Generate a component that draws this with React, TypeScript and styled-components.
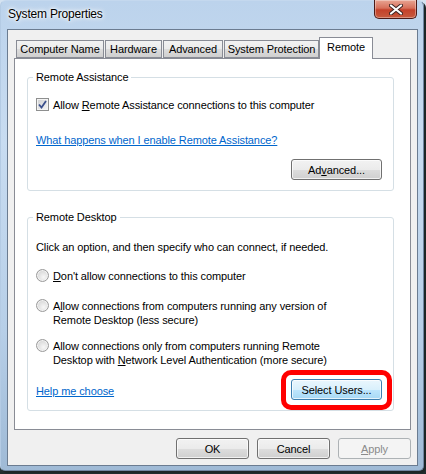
import styled, { createGlobalStyle } from "styled-components"

const GlobalStyle = createGlobalStyle`
    html, body {
        margin: 0;
        padding: 0;
        background: #2a3a3a;
    }
    body {
        font-family: 'Liberation Sans', Arial, sans-serif;
        font-size: 11px;
        letter-spacing: -0.1px;
        color: #000;
    }
`

const Screen = styled.div`
    width: 426px;
    height: 474px;
    overflow: hidden;
    background: linear-gradient(180deg, #d5e3f1 0%, #c9dcef 80%, #1e2b2b 100%);
`

const Frame = styled.div`
    width: 424px;
    height: 471px;
    box-sizing: border-box;
    border-radius: 6px 6px 5px 5px;
    background: linear-gradient(180deg, #bcd3ec 0%, #c8dcf1 30%, #b7cfe8 70%, #9fbad6 100%);
    border: 1px solid #6f86a1;
    border-top-color: #c4d8ee;
    border-left-color: #b4cbe4;
    box-shadow: 2px 2px 0 #1c2626;
    display: flex;
    flex-direction: column;
    padding: 0 5px 4px 6px;
`

const TitleBar = styled.div`
    height: 28px;
    display: flex;
    align-items: flex-start;
    justify-content: space-between;
`

const Title = styled.div`
    padding: 6px 0 0 1px;
    font-size: 12px;
    letter-spacing: -0.2px;
    color: #000;
    text-shadow: 0 0 6px #fff, 0 0 4px #fff, 0 0 2px #fff;
`

const CloseButton = styled.div`
    width: 43px;
    height: 19px;
    margin-top: -1px;
    margin-right: 1px;
    box-sizing: border-box;
    border: 1px solid #4b1a17;
    border-top: none;
    border-radius: 0 0 5px 5px;
    background: linear-gradient(180deg, #e8a593 0%, #d7705b 45%, #c4412a 55%, #c75a3e 100%);
    box-shadow: inset 0 0 0 1px rgba(255, 255, 255, 0.35);
    display: flex;
    align-items: center;
    justify-content: center;
`

const Client = styled.div`
    flex: 1;
    background: #f0f0f0;
    border: 1px solid #6b7c91;
    display: flex;
    flex-direction: column;
    padding: 7px 6px 0 6px;
`

const TabStrip = styled.div`
    display: flex;
    align-items: flex-end;
    height: 21px;
    padding-left: 2px;
    position: relative;
    z-index: 1;
`

const Tab = styled.div<{ $active?: boolean; $w: number }>`
    box-sizing: border-box;
    width: ${p => p.$w}px;
    white-space: nowrap;
    height: ${p => (p.$active ? "22px" : "18px")};
    margin-right: ${p => (p.$active ? "0" : "1px")};
    margin-left: ${p => (p.$active ? "-1px" : "0")};
    margin-bottom: ${p => (p.$active ? "-1px" : "0")};
    border: 1px solid #898c95;
    border-bottom: ${p => (p.$active ? "none" : "1px solid #898c95")};
    background: ${p => (p.$active ? "#fff" : "linear-gradient(180deg, #f2f2f2 0%, #ebebeb 50%, #dddddd 51%, #cfcfcf 100%)")};
    display: flex;
    align-items: center;
    justify-content: center;
    padding-bottom: ${p => (p.$active ? "4px" : "0")};
`

const Panel = styled.div`
    height: 372px;
    box-sizing: border-box;
    background: #fff;
    border: 1px solid #898c95;
    padding: 11px 16px 0 12px;
    display: flex;
    flex-direction: column;
    gap: 19px;
`

const Group = styled.fieldset<{ $bottom: number }>`
    margin: 0;
    box-sizing: border-box;
    border: 1px solid #d5dfe5;
    border-radius: 3px;
    padding: 6px 1px ${p => p.$bottom}px 8px;
    display: flex;
    flex-direction: column;
`

const Legend = styled.legend`
    padding: 0 3px;
    margin-left: -3px;
    line-height: 14px;
`

const Row = styled.label<{ $top?: number }>`
    display: flex;
    align-items: flex-start;
    gap: 4px;
    margin-top: ${p => p.$top ?? 0}px;
    line-height: 14px;
`

const Text = styled.div<{ $top?: number }>`
    margin-top: ${p => p.$top ?? 0}px;
    line-height: 14px;
`

const Box = styled.span`
    width: 13px;
    height: 13px;
    flex: none;
    box-sizing: border-box;
    border: 1px solid #8e8f8f;
    background: linear-gradient(135deg, #cfd0d2 0%, #f5f5f6 100%);
    box-shadow: inset 0 0 0 1px #f4f4f4;
    display: flex;
    align-items: center;
    justify-content: center;
`

const Radio = styled.span`
    width: 13px;
    height: 13px;
    flex: none;
    box-sizing: border-box;
    border-radius: 50%;
    border: 1px solid #9a9a9a;
    background: radial-gradient(circle at 60% 65%, #f7f7f7 0%, #e1e1e1 50%, #c8c8c8 100%);
    box-shadow: inset 0 0 0 1px #f2f2f2;
`

const Link = styled.a<{ $top?: number }>`
    color: #0066cc;
    text-decoration: underline;
    margin-top: ${p => p.$top ?? 0}px;
    line-height: 14px;
    align-self: flex-start;
    cursor: pointer;
`

const Key = styled.span`
    text-decoration: underline;
`

const ButtonRow = styled.div<{ $top?: number; $right?: number }>`
    display: flex;
    justify-content: space-between;
    align-items: flex-start;
    margin-top: ${p => p.$top ?? 0}px;
    padding-right: ${p => p.$right ?? 0}px;
`

const Button = styled.div<{ $variant?: "hot" | "disabled" }>`
    width: 73px;
    height: 21px;
    box-sizing: border-box;
    border-radius: 3px;
    display: flex;
    align-items: center;
    justify-content: center;
    border: 1px solid ${p => (p.$variant === "hot" ? "#3c7fb1" : p.$variant === "disabled" ? "#adb2b5" : "#707070")};
    color: ${p => (p.$variant === "disabled" ? "#8b8b8b" : "#000")};
    background: ${p =>
        p.$variant === "hot"
            ? "linear-gradient(180deg, #eaf6fd 0%, #d9f0fc 50%, #bee6fd 51%, #a7d9f5 100%)"
            : p.$variant === "disabled"
            ? "#f4f4f4"
            : "linear-gradient(180deg, #f2f2f2 0%, #ebebeb 50%, #dddddd 51%, #cfcfcf 100%)"};
    box-shadow: inset 0 0 0 1px ${p => (p.$variant === "disabled" ? "#f4f4f4" : "rgba(255,255,255,0.7)")};
`

const WideButton = styled(Button)`
    width: 91px;
`

const Highlight = styled.div`
    padding: 4px 5px 5px 5px;
    border: 5px solid #ff0000;
    border-radius: 10px;
    background: #fff;
`

const Footer = styled.div`
    display: flex;
    justify-content: flex-end;
    gap: 8px;
    padding: 8px 0 0 0;
`

export default function App() {
    return (
        <Screen>
            <GlobalStyle />
            <Frame>
                <TitleBar>
                    <Title>System Properties</Title>
                    <CloseButton>
                        <svg width="14" height="11" viewBox="0 0 14 11">
                            <path d="M2 1.5 L12 9.5 M12 1.5 L2 9.5" stroke="#3a2220" strokeWidth="4" strokeLinecap="round" />
                            <path d="M2 1.5 L12 9.5 M12 1.5 L2 9.5" stroke="#fff" strokeWidth="2.2" strokeLinecap="round" />
                        </svg>
                    </CloseButton>
                </TitleBar>
                <Client>
                    <TabStrip>
                        <Tab $w={88}>Computer Name</Tab>
                        <Tab $w={57}>Hardware</Tab>
                        <Tab $w={60}>Advanced</Tab>
                        <Tab $w={95}>System Protection</Tab>
                        <Tab $active $w={54}>Remote</Tab>
                    </TabStrip>
                    <Panel>
                        <Group $bottom={10}>
                            <Legend>Remote Assistance</Legend>
                            <Row $top={8}>
                                <Box>
                                    <svg width="9" height="9" viewBox="0 0 9 9">
                                        <path d="M1 4.5 L3.5 7.5 L8 1" fill="none" stroke="#3a4f8c" strokeWidth="1.8" />
                                    </svg>
                                </Box>
                                <span>Allow <Key>R</Key>emote Assistance connections to this computer</span>
                            </Row>
                            <Link $top={21}>What happens when I enable Remote Assistance?</Link>
                            <ButtonRow $top={12} $right={10}>
                                <span />
                                <WideButton>Ad<Key>v</Key>anced...</WideButton>
                            </ButtonRow>
                        </Group>
                        <Group $bottom={0}>
                            <Legend>Remote Desktop</Legend>
                            <Text $top={10}>Click an option, and then specify who can connect, if needed.</Text>
                            <Row $top={15}>
                                <Radio />
                                <span><Key>D</Key>on't allow connections to this computer</span>
                            </Row>
                            <Row $top={16}>
                                <Radio />
                                <span>A<Key>l</Key>low connections from computers running any version of<br />Remote Desktop (less secure)</span>
                            </Row>
                            <Row $top={12}>
                                <Radio />
                                <span>Allow connections only from computers running Remote<br />Desktop with <Key>N</Key>etwork Level Authentication (more secure)</span>
                            </Row>
                            <ButtonRow $top={3}>
                                <Link $top={14}>Help me choose</Link>
                                <Highlight>
                                    <WideButton $variant="hot">Select Users...</WideButton>
                                </Highlight>
                            </ButtonRow>
                        </Group>
                    </Panel>
                    <Footer>
                        <Button>OK</Button>
                        <Button>Cancel</Button>
                        <Button $variant="disabled"><Key>A</Key>pply</Button>
                    </Footer>
                </Client>
            </Frame>
        </Screen>
    )
}
